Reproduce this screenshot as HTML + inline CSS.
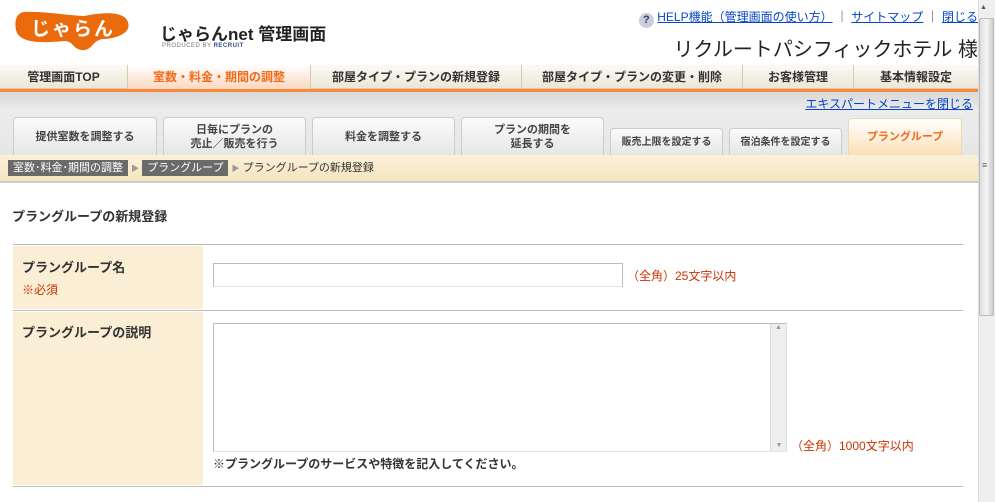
<!DOCTYPE html>
<html><head><meta charset="utf-8"><style>
*{margin:0;padding:0;box-sizing:border-box}
body{width:995px;height:502px;overflow:hidden;background:#fff;font-family:"Liberation Sans","Noto Sans CJK JP",sans-serif;font-size:12px;color:#333;position:relative}
.a{position:absolute}
a{color:#0645c8;text-decoration:underline}
.nav{top:65px;left:0;width:978px;height:24px;background:linear-gradient(#fbfaf6,#ece6d8);border-bottom:1px solid #d8ccb0}
.nav div{position:absolute;top:0;height:24px;line-height:24px;text-align:center;font-weight:bold;font-size:12px;color:#333;border-left:1px solid #d8ccb0}
.tab{position:absolute;background:linear-gradient(#fbfbfb,#e6e6e6);border:1px solid #ccc;border-bottom:none;border-radius:4px 4px 0 0;text-align:center;font-weight:bold;font-size:11px;color:#444;line-height:14px}
.crumb{background:#6a6a6a;color:#fff;padding:0 5px;font-size:11px;height:16px;line-height:16px;display:inline-block}
.red{color:#cc3300}
</style></head><body>
<!-- logo -->
<svg class="a" style="left:14px;top:10px" width="118" height="42" viewBox="0 0 118 42"><path d="M10 2 C30 1 50 5 70 6 C90 2 110 1 114 12 C118 24 100 29 88 29 C78 31 78 41 68 40 C58 39 60 31 50 31 C30 33 5 34 2 20 C0 10 3 3 10 2Z" fill="#ea6a0c"/><text x="59" y="25" text-anchor="middle" fill="#fff" font-size="19" font-weight="bold" font-family="Noto Sans CJK JP,sans-serif" letter-spacing="2">じゃらん</text></svg>
<div class="a" style="left:160px;top:20px;font-size:17px;font-weight:bold;color:#222">じゃらんnet 管理画面</div>
<div class="a" style="left:162px;top:43px;font-size:6px;color:#777;letter-spacing:.5px">PRODUCED BY <b style="color:#2a4f8f">RECRUIT</b></div>
<div class="a" style="right:17px;top:8px;font-size:12px;color:#333;white-space:nowrap"><span style="display:inline-block;width:15px;height:15px;border-radius:50%;background:#ccd;color:#246;font-weight:bold;text-align:center;line-height:15px;font-size:11px;vertical-align:-2px">?</span> <a href="#">HELP機能（管理画面の使い方）</a> ｜ <a href="#">サイトマップ</a> ｜ <a href="#">閉じる</a></div>
<div class="a" style="right:17px;top:33px;font-size:20px;color:#222">リクルートパシフィックホテル 様</div>
<div class="a nav">
<div style="left:0;width:127px;border:none">管理画面TOP</div>
<div style="left:127px;width:183px;color:#f36a1a;background:linear-gradient(#fff,#fbd8c0)">室数・料金・期間の調整</div>
<div style="left:310px;width:211px">部屋タイプ・プランの新規登録</div>
<div style="left:521px;width:221px">部屋タイプ・プランの変更・削除</div>
<div style="left:742px;width:111px">お客様管理</div>
<div style="left:853px;width:125px">基本情報設定</div>
</div>
<div class="a" style="top:89px;left:0;width:978px;height:3px;background:#f88a3a"></div>
<div class="a" style="top:92px;left:0;width:978px;height:63px;background:linear-gradient(#d8d8d8,#ececec 30%,#e6e6e6)"></div>
<div class="a" style="top:95px;right:22px;font-size:12px"><a href="#">エキスパートメニューを閉じる</a></div>
<div class="tab" style="left:13px;top:117px;width:144px;height:38px;line-height:38px">提供室数を調整する</div>
<div class="tab" style="left:163px;top:117px;width:143px;height:38px;padding-top:5px">日毎にプランの<br>売止／販売を行う</div>
<div class="tab" style="left:312px;top:117px;width:143px;height:38px;line-height:38px">料金を調整する</div>
<div class="tab" style="left:461px;top:117px;width:143px;height:38px;padding-top:5px">プランの期間を<br>延長する</div>
<div class="tab" style="left:610px;top:128px;width:113px;height:27px;line-height:27px;font-size:10px">販売上限を設定する</div>
<div class="tab" style="left:729px;top:128px;width:113px;height:27px;line-height:27px;font-size:10px">宿泊条件を設定する</div>
<div class="tab" style="left:848px;top:118px;width:114px;height:37px;line-height:36px;color:#f36a1a;background:linear-gradient(#fff,#fbe0b8);border-color:#f0d8b0">プラングループ</div>
<div class="a" style="top:155px;left:0;width:978px;height:28px;background:linear-gradient(#fbf0d8,#f5e5c0);border-bottom:2px solid #ccc;padding:4px 0 0 8px;font-size:11px;color:#333">
<span class="crumb">室数･料金･期間の調整</span> <span style="color:#999;font-size:8px">▶</span> <span class="crumb">プラングループ</span> <span style="color:#999;font-size:8px">▶</span> プラングループの新規登録</div>
<div class="a" style="left:12px;top:206px;font-size:13px;font-weight:bold;color:#333">プラングループの新規登録</div>
<div class="a" style="left:13px;top:244px;width:950px;height:1px;background:#bbb"></div>
<div class="a" style="left:13px;top:246px;width:190px;height:63px;background:#faefd5"></div>
<div class="a" style="left:22px;top:257px;font-size:13px;font-weight:bold">プラングループ名</div>
<div class="a red" style="left:22px;top:281px;font-size:12px">※必須</div>
<div class="a" style="left:213px;top:263px;width:410px;height:24px;border:1px solid #bbb;border-bottom-color:#e4e4e4"></div>
<div class="a red" style="left:627px;top:267px;font-size:12px">（全角）25文字以内</div>
<div class="a" style="left:13px;top:310px;width:950px;height:1px;background:#bbb"></div>
<div class="a" style="left:13px;top:312px;width:190px;height:173px;background:#faefd5"></div>
<div class="a" style="left:22px;top:322px;font-size:13px;font-weight:bold">プラングループの説明</div>
<div class="a" style="left:213px;top:323px;width:574px;height:129px;border:1px solid #bbb;border-bottom-color:#e4e4e4;border-right-color:#ddd"></div>
<div class="a" style="left:770px;top:324px;width:16px;height:127px;background:#eee;border-left:1px solid #ddd;font-size:7px;color:#999;text-align:center">▲<div style="position:absolute;bottom:2px;width:16px">▼</div></div>
<div class="a red" style="left:791px;top:437px;font-size:12px">（全角）1000文字以内</div>
<div class="a" style="left:213px;top:455px;font-size:12px;font-weight:bold">※プラングループのサービスや特徴を記入してください。</div>
<div class="a" style="left:13px;top:486px;width:950px;height:1px;background:#bbb"></div>
<!-- scrollbar -->
<div class="a" style="left:978px;top:0;width:17px;height:502px;background:#efefef;border-left:1px solid #ddd"></div>
<div class="a" style="left:980px;top:4px;font-size:7px;color:#555">▲</div>
<div class="a" style="left:979px;top:18px;width:15px;height:298px;background:linear-gradient(90deg,#ddd,#f6f6f6,#ccc);border:1px solid #bbb;border-radius:2px"></div>
<div class="a" style="left:982px;top:160px;font-size:9px;color:#666">≡</div>
</body></html>
